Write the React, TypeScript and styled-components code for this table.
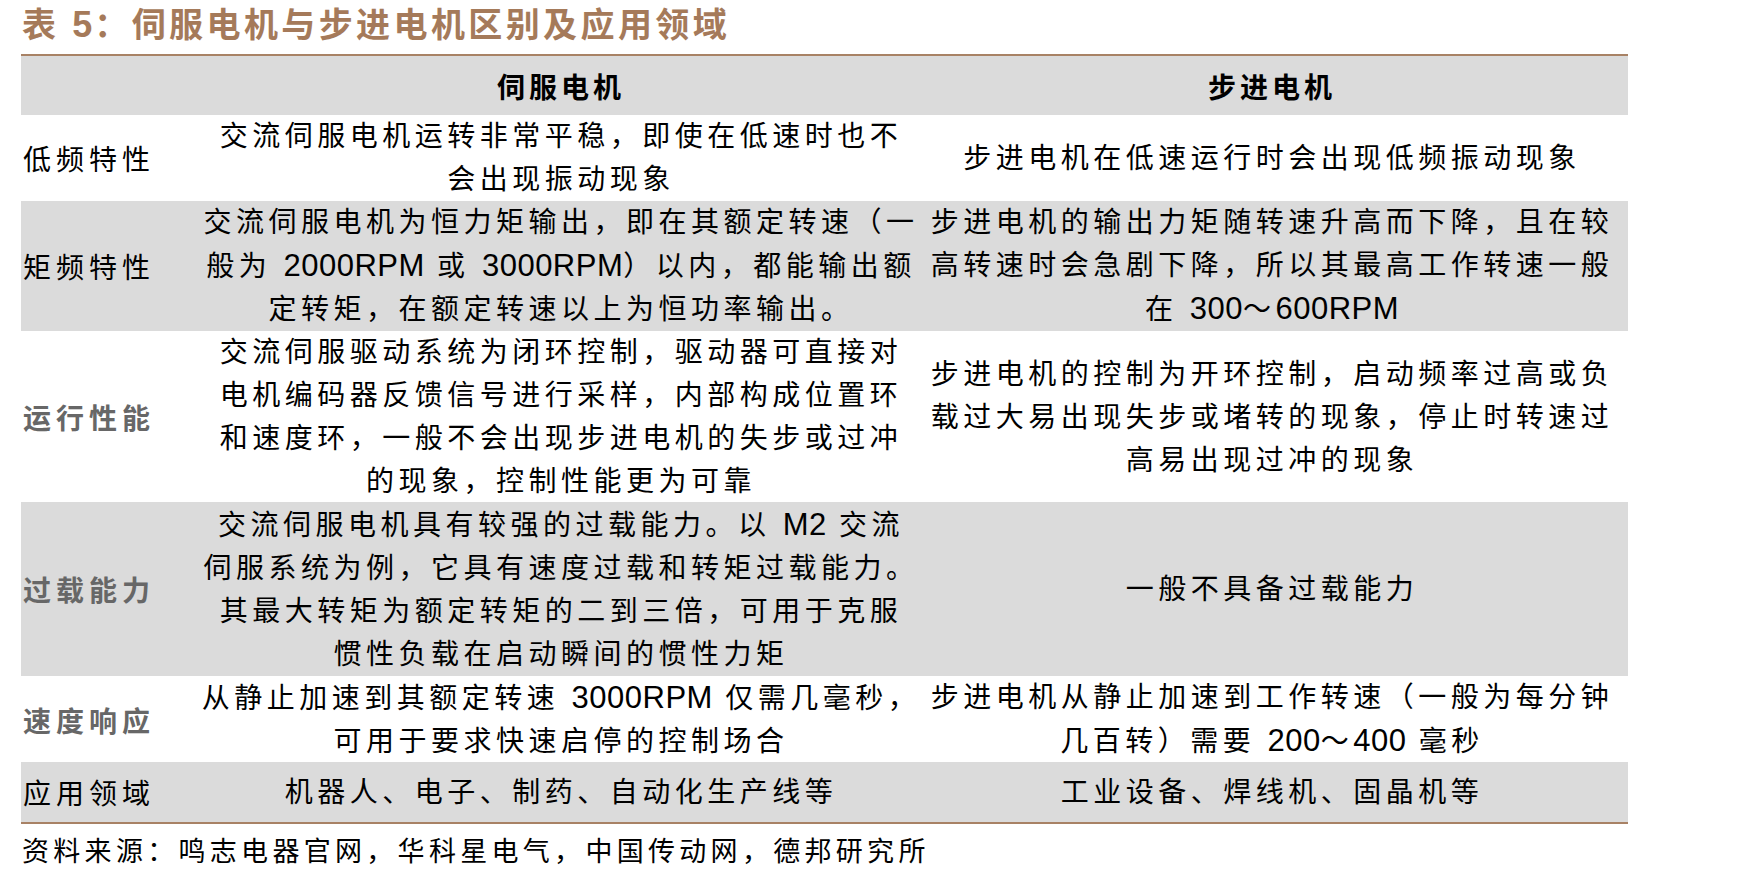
import styled, { createGlobalStyle } from "styled-components";

type Line = string[];

interface RowData {
  label: string;
  muted?: boolean;
  servo: Line;
  stepper: Line;
  height: number;
}

const rows: RowData[] = [
  {
    label: "低频特性",
    servo: ["交流伺服电机运转非常平稳，即使在低速时也不", "会出现振动现象"],
    stepper: ["步进电机在低速运行时会出现低频振动现象"],
    height: 86,
  },
  {
    label: "矩频特性",
    servo: [
      "交流伺服电机为恒力矩输出，即在其额定转速（一",
      "般为 2000RPM 或 3000RPM）以内，都能输出额",
      "定转矩，在额定转速以上为恒功率输出。",
    ],
    stepper: [
      "步进电机的输出力矩随转速升高而下降，且在较",
      "高转速时会急剧下降，所以其最高工作转速一般",
      "在 300～600RPM",
    ],
    height: 130,
  },
  {
    label: "运行性能",
    muted: true,
    servo: [
      "交流伺服驱动系统为闭环控制，驱动器可直接对",
      "电机编码器反馈信号进行采样，内部构成位置环",
      "和速度环，一般不会出现步进电机的失步或过冲",
      "的现象，控制性能更为可靠",
    ],
    stepper: [
      "步进电机的控制为开环控制，启动频率过高或负",
      "载过大易出现失步或堵转的现象，停止时转速过",
      "高易出现过冲的现象",
    ],
    height: 171,
  },
  {
    label: "过载能力",
    muted: true,
    servo: [
      "交流伺服电机具有较强的过载能力。以 M2 交流",
      "伺服系统为例，它具有速度过载和转矩过载能力。",
      "其最大转矩为额定转矩的二到三倍，可用于克服",
      "惯性负载在启动瞬间的惯性力矩",
    ],
    stepper: ["一般不具备过载能力"],
    height: 174,
  },
  {
    label: "速度响应",
    muted: true,
    servo: [
      "从静止加速到其额定转速 3000RPM 仅需几毫秒，",
      "可用于要求快速启停的控制场合",
    ],
    stepper: [
      "步进电机从静止加速到工作转速（一般为每分钟",
      "几百转）需要 200～400 毫秒",
    ],
    height: 86,
  },
  {
    label: "应用领域",
    servo: ["机器人、电子、制药、自动化生产线等"],
    stepper: ["工业设备、焊线机、固晶机等"],
    height: 60,
  },
];

// split a line so latin/number runs can use their own spacing
function renderLine(line: string) {
  return line.split(/([A-Za-z0-9]+)/).map((part, i) =>
    /^[A-Za-z0-9]+$/.test(part) ? <Latin key={i}>{part}</Latin> : part
  );
}

export default function App() {
  return (
    <>
      <GlobalStyle />
      <Page>
        <Title>
          表 <TitleNum>5</TitleNum>：伺服电机与步进电机区别及应用领域
        </Title>
        <Table>
          <Row $height={59} $shaded>
            <LabelCell />
            <HeaderCell>伺服电机</HeaderCell>
            <HeaderCell>步进电机</HeaderCell>
          </Row>
          {rows.map((row, i) => (
            <Row key={row.label} $height={row.height} $shaded={i % 2 === 1}>
              <LabelCell $muted={row.muted}>{row.label}</LabelCell>
              <TextCell>
                {row.servo.map((line) => (
                  <TextLine key={line}>{renderLine(line)}</TextLine>
                ))}
              </TextCell>
              <TextCell>
                {row.stepper.map((line) => (
                  <TextLine key={line}>{renderLine(line)}</TextLine>
                ))}
              </TextCell>
            </Row>
          ))}
        </Table>
        <Source>资料来源：鸣志电器官网，华科星电气，中国传动网，德邦研究所</Source>
      </Page>
    </>
  );
}

const GlobalStyle = createGlobalStyle`
  body {
    margin: 0;
    background: #ffffff;
    color: #000000;
    font-family: "Liberation Sans", "Noto Sans CJK SC", sans-serif;
  }
`;

const Page = styled.div`
  width: 1607px;
  padding-left: 21px;
`;

const Title = styled.h1`
  margin: 0;
  height: 54px;
  line-height: 50px;
  padding-left: 1px;
  font-size: 34px;
  font-weight: 700;
  letter-spacing: 3.4px;
  color: #a57a5a;
  white-space: nowrap;
`;

const TitleNum = styled.span`
  font-size: 36px;
  letter-spacing: 2px;
`;

const Table = styled.div`
  display: flex;
  flex-direction: column;
  border-top: 2px solid #a88265;
  border-bottom: 2px solid #a88265;
`;

const Row = styled.div<{ $height: number; $shaded?: boolean }>`
  display: grid;
  grid-template-columns: 185px 710px 712px;
  height: ${(p) => p.$height}px;
  background: ${(p) => (p.$shaded ? "#dbdbdb" : "#ffffff")};
`;

const LabelCell = styled.div<{ $muted?: boolean }>`
  display: flex;
  align-items: center;
  padding-left: 2px;
  font-size: 28px;
  letter-spacing: 5px;
  white-space: nowrap;
  color: ${(p) => (p.$muted ? "#676767" : "#000000")};
  font-weight: ${(p) => (p.$muted ? 700 : 400)};
`;

const HeaderCell = styled.div`
  display: flex;
  align-items: center;
  justify-content: center;
  font-size: 28px;
  font-weight: 700;
  letter-spacing: 4px;
`;

const TextCell = styled.div`
  display: flex;
  flex-direction: column;
  align-items: center;
  justify-content: center;
  min-width: 0;
`;

const TextLine = styled.div`
  font-size: 28px;
  line-height: 43px;
  letter-spacing: 4.5px;
  white-space: nowrap;
`;

const Latin = styled.span`
  font-size: 31px;
  letter-spacing: 0.5px;
`;

const Source = styled.div`
  height: 58px;
  line-height: 56px;
  padding-left: 1px;
  font-size: 27px;
  letter-spacing: 4.3px;
  white-space: nowrap;
`;
